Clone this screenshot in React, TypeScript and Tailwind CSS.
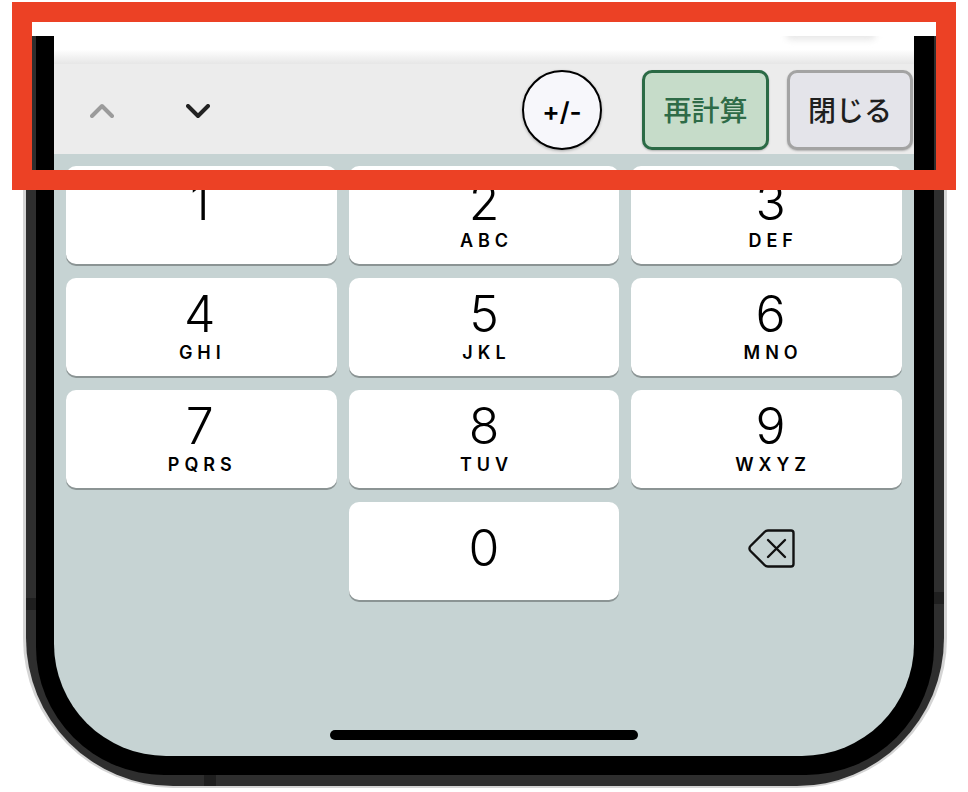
const keys = [
  { digit: '1', letters: '', shift: 'pr-[3px]' },
  { digit: '2', letters: 'ABC', shift: '' },
  { digit: '3', letters: 'DEF', shift: 'pl-[8px]' },
  { digit: '4', letters: 'GHI', shift: 'pr-[3px]' },
  { digit: '5', letters: 'JKL', shift: '' },
  { digit: '6', letters: 'MNO', shift: 'pl-[8px]' },
  { digit: '7', letters: 'PQRS', shift: 'pr-[3px]' },
  { digit: '8', letters: 'TUV', shift: '' },
  { digit: '9', letters: 'WXYZ', shift: 'pl-[8px]' },
]

function Key({ digit, letters, shift }: { digit: string; letters?: string; shift?: string }) {
  return (
    <button
      className={`flex h-[98px] flex-col items-center rounded-[10px] bg-white text-black shadow-[0_2px_0_#8b9494] ${
        letters || digit === '1' ? 'pt-[11px]' : 'pt-[21px]'
      } ${shift ?? ''}`}
    >
      <span className="h-[50px] text-[50px] leading-[50px] font-light">{digit}</span>
      {letters ? (
        <span className="mt-[4px] pl-[5px] text-[18px] leading-[20px] font-semibold tracking-[5px]">{letters}</span>
      ) : null}
    </button>
  )
}

function Chevron({ up, color }: { up?: boolean; color: string }) {
  return (
    <svg width="24" height="15" viewBox="0 0 24 15" fill="none">
      <path
        d={up ? 'M2 13 L12 3 L22 13' : 'M2 2 L12 12 L22 2'}
        stroke={color}
        strokeWidth="4"
        strokeLinecap="round"
        strokeLinejoin="round"
      />
    </svg>
  )
}

export default function App() {
  return (
    <div className="relative h-[792px] w-[968px] overflow-hidden bg-white font-['Inter','Noto_Sans_CJK_JP',sans-serif]">
      <div className="pt-[36px] pl-[23px]">
        <div className="relative h-[752px] w-[924px] rounded-b-[150px] border-x-[3px] border-b-[2px] border-[#d4d4d4] bg-[#2e2e2e] px-[10px] pb-[11px]">
          <div className="h-full rounded-b-[128px] bg-black pr-[20px] pb-[19px] pl-[18px]">
            <div className="flex h-full flex-col overflow-hidden rounded-b-[112px] bg-[#c6d3d3]">
              <div className="relative h-[28px] bg-[linear-gradient(180deg,#ffffff_0%,#ffffff_48%,#e6e6e6_100%)]">
                <div className="absolute top-[-6px] right-[38px] h-[10px] w-[90px] rounded-full bg-[#e8e8e8] blur-[3px]" />
              </div>
              <div className="flex h-[90px] items-center bg-[#ececec] pt-[2px] pr-px pl-[36px]">
                <Chevron up color="#9b9b9b" />
                <div className="mt-[2px] ml-[72px]">
                  <Chevron color="#222222" />
                </div>
                <div className="ml-auto flex h-[80px] items-stretch gap-[18px]">
                  <button className="mr-[22px] flex w-[80px] items-center justify-center rounded-full border-2 border-black bg-[#f7f7fb] pt-[3px] text-[26px] font-semibold text-black shadow-[0_1px_3px_rgba(0,0,0,0.3)]">
                    +/-
                  </button>
                  <button className="w-[127px] rounded-[10px] border-[3px] border-[#2b6a45] bg-[#c6dcc9] pt-px text-[28px] font-medium text-[#2e6b47] shadow-[0_1px_2px_rgba(0,0,0,0.25)]">
                    再計算
                  </button>
                  <button className="w-[126px] rounded-[10px] border-[3px] border-[#a3a3a3] bg-[#e4e4ea] pt-px text-[28px] font-medium text-[#1f1f1f] shadow-[0_1px_2px_rgba(0,0,0,0.25)]">
                    閉じる
                  </button>
                </div>
              </div>
              <div className="flex flex-1 flex-col px-[12px] pt-[12px] pb-[16px]">
                <div className="grid grid-cols-3 gap-x-[12px] gap-y-[14px]">
                  {keys.map((key) => (
                    <Key key={key.digit} digit={key.digit} letters={key.letters} shift={key.shift} />
                  ))}
                  <div />
                  <Key digit="0" />
                  <div className="flex items-start justify-center pt-[27px] pl-[10px]">
                    <svg width="47" height="39" viewBox="0 0 47 39" fill="none">
                      <path
                        d="M20 1.5 H43 A2.5 2.5 0 0 1 45.5 4 V35 A2.5 2.5 0 0 1 43 37.5 H20 A5 5 0 0 1 16.5 36 L2.5 22 A3.5 3.5 0 0 1 2.5 17 L16.5 3 A5 5 0 0 1 20 1.5 Z"
                        stroke="#111111"
                        strokeWidth="2.4"
                        strokeLinejoin="round"
                      />
                      <path d="M20 11 L37 28 M37 11 L20 28" stroke="#111111" strokeWidth="2.4" strokeLinecap="round" />
                    </svg>
                  </div>
                </div>
                <div className="mt-auto h-[10px] w-[308px] self-center rounded-full bg-black" />
              </div>
            </div>
          </div>
          {/* antenna bands */}
          <div className="absolute top-[562px] left-0 h-[12px] w-[10px] bg-[#1f1f1f]" />
          <div className="absolute top-[556px] right-0 h-[12px] w-[10px] bg-[#1f1f1f]" />
          <div className="absolute bottom-0 left-[178px] h-[11px] w-[12px] bg-[#1f1f1f]" />
        </div>
      </div>
      {/* red annotation box */}
      <div className="absolute top-[2px] left-[12px] h-[188px] w-[944px] border-[20px] border-[#ec4125]" />
    </div>
  )
}
